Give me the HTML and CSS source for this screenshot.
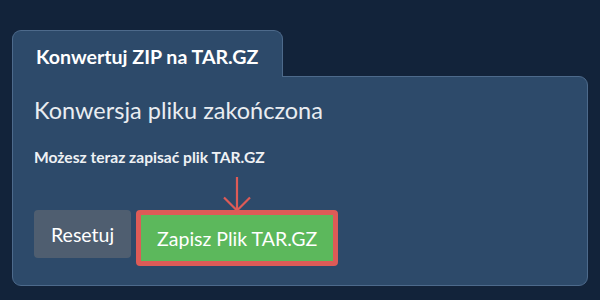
FILE: index.html
```html
<!DOCTYPE html>
<html lang="pl">
<head>
<meta charset="utf-8">
<link rel="stylesheet" href="styles.css">
</head>
<body>
<div class="wrap">
  <div class="tab">Konwertuj ZIP na TAR.GZ</div>
  <div class="panel">
    <h2 class="heading">Konwersja pliku zakończona</h2>
    <p class="note">Możesz teraz zapisać plik TAR.GZ</p>
    <div class="actions">
      <button class="btn btn-reset">Resetuj</button>
      <div class="highlight">
        <svg class="arrow" width="30" height="36" viewBox="0 0 30 36" aria-hidden="true">
          <path d="M15 1 V34 M2 21.5 L15 34.5 L28 21.5" fill="none" stroke="#dd5b57" stroke-width="2.2"/>
        </svg>
        <button class="btn btn-save">Zapisz Plik TAR.GZ</button>
      </div>
    </div>
  </div>
</div>
</body>
</html>
```
FILE: styles.css
```css
html, body {
  margin: 0;
  padding: 0;
  background: #12233a;
  font-family: Lato, "Open Sans", sans-serif;
  color: #eef1f4;
}
.wrap {
  padding: 30px 12px 0 12px;
}
.tab {
  display: inline-block;
  box-sizing: border-box;
  height: 47px;
  line-height: 41px;
  padding: 5px 24px 0 23px;
  background: #2d4a6a;
  border: 1px solid #4d6a8b;
  border-bottom: none;
  border-radius: 9px 9px 0 0;
  font-size: 19.6px;
  font-weight: 700;
  color: #ffffff;
  margin-bottom: -1px;
  position: relative;
  z-index: 1;
}
.panel {
  box-sizing: border-box;
  width: 576px;
  background: #2d4a6a;
  border: 1px solid #4d6a8b;
  border-radius: 0 9px 9px 9px;
  padding: 19px 21px 19px 21px;
}
.heading {
  margin: 0;
  font-size: 23.5px;
  font-weight: 400;
  line-height: 28px;
  color: #e9edf1;
}
.note {
  margin: 24px 0 0 0;
  font-size: 15.6px;
  font-weight: 700;
  line-height: 18px;
  color: #eef1f4;
}
.actions {
  display: flex;
  align-items: flex-start;
  gap: 5px;
  margin-top: 44px;
}
.btn {
  font-family: inherit;
  font-size: 19.5px;
  font-weight: 400;
  color: #ffffff;
  border: none;
  cursor: pointer;
}
.btn-reset {
  height: 48px;
  padding: 0 17px;
  background: #4f5e70;
  border-radius: 4px;
}
.highlight {
  position: relative;
  border: 5px solid #dd5b57;
  border-radius: 4px;
  line-height: 0;
}
.arrow {
  position: absolute;
  left: 50%;
  margin-left: -15px;
  bottom: 100%;
  margin-bottom: 3px;
}
.btn-save {
  height: 46px;
  padding: 0 16px;
  background: #5cb85c;
  border-radius: 0;
}
```
